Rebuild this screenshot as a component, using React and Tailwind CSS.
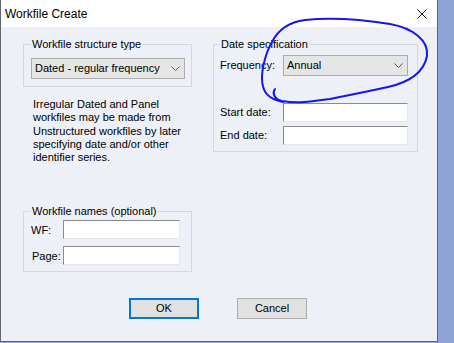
const LABEL = "text-[11px] leading-[13px]";

function Chevron() {
  return (
    <svg width="9" height="5" viewBox="0 0 9 5" className="shrink-0">
      <path d="M0.5 0.5 L4.5 4.5 L8.5 0.5" fill="none" stroke="#5a5a5a" strokeWidth="1" />
    </svg>
  );
}

function Select({ value, width }) {
  return (
    <div
      className="h-[21px] bg-[#e5e5e5] border border-[#adadad] flex items-center justify-between pl-[3px] pr-[4px]"
      style={{ width }}
    >
      <span className="text-[11px] text-black">{value}</span>
      <Chevron />
    </div>
  );
}

function TextBox({ width }) {
  return (
    <div
      className="h-[19px] bg-white border-t border-l border-t-[#8c8c8c] border-l-[#8c8c8c] border-r border-b border-r-[#e6e6e6] border-b-[#e6e6e6]"
      style={{ width }}
    />
  );
}

function Group({ title, className, children }) {
  return (
    <fieldset className={`border border-[#d3d7df] ${className}`}>
      <legend className={`${LABEL} px-[1px]`}>{title}</legend>
      {children}
    </fieldset>
  );
}

export default function App() {
  return (
    <div className="w-[454px] h-[343px] bg-[#8ea3d6] overflow-hidden font-['Liberation_Sans',Arial,sans-serif] text-black">
      <div className="relative w-[438px] h-[342px] bg-[#edf0f7] border-x border-b border-[#5f6673] flex flex-col">
        {/* title bar */}
        <div className="h-[27px] bg-white flex items-center justify-between pl-[4px] pr-[10px]">
          <span className="text-[12px]">Workfile Create</span>
          <svg width="10" height="10" viewBox="0 0 10 10">
            <path d="M0.5 0.5 L9.5 9.5 M9.5 0.5 L0.5 9.5" stroke="#111" strokeWidth="1" />
          </svg>
        </div>

        <div className="pl-[22px]">
          <div className="flex items-start gap-[21px]">
            {/* left column */}
            <div className="w-[169px] flex flex-col">
              <Group title="Workfile structure type" className="mt-[11px] pl-[7px] pb-[7px]">
                <div className="mt-[7px]">
                  <Select value="Dated - regular frequency" width={154} />
                </div>
              </Group>
              <p className="mt-[11px] pl-[10px] text-[11px] leading-[13.3px] whitespace-nowrap">
                Irregular Dated and Panel
                <br />
                workfiles may be made from
                <br />
                Unstructured workfiles by later
                <br />
                specifying date and/or other
                <br />
                identifier series.
              </p>
              <Group title="Workfile names (optional)" className="mt-[41px] pl-[7px] pb-[6px]">
                <div className="mt-[2px] flex items-center">
                  <span className="w-[32px] text-[11px]">WF:</span>
                  <TextBox width={117} />
                </div>
                <div className="mt-[7px] flex items-center">
                  <span className="w-[32px] pl-[1px] text-[11px]">Page:</span>
                  <TextBox width={117} />
                </div>
              </Group>
            </div>

            {/* right column */}
            <div className="w-[205px] flex flex-col">
              <Group title="Date specification" className="mt-[11px] pl-[6px] pb-[6px]">
                <div className="mt-[4px] flex items-center">
                  <span className="w-[63px] text-[11px]">Frequency:</span>
                  <Select value="Annual" width={125} />
                </div>
                <div className="mt-[27px] flex items-center">
                  <span className="w-[63px] text-[11px]">Start date:</span>
                  <TextBox width={125} />
                </div>
                <div className="mt-[4px] flex items-center">
                  <span className="w-[63px] text-[11px]">End date:</span>
                  <TextBox width={125} />
                </div>
              </Group>
            </div>
          </div>

          {/* buttons */}
          <div className="mt-[26px] ml-[106px] flex gap-[38px]">
            <button className="w-[70px] h-[21px] border-2 border-[#0078d7] bg-[#e1e1e1] text-[11px] leading-none">
              OK
            </button>
            <button className="w-[70px] h-[21px] border border-[#adadad] bg-[#e1e1e1] text-[11px] leading-none">
              Cancel
            </button>
          </div>
        </div>

        {/* hand-drawn annotation */}
        <svg
          className="absolute left-[-1px] top-0 pointer-events-none"
          width="438"
          height="342"
          viewBox="0 0 438 342"
        >
          <path
            d="M275 89 C272 93, 274 99, 282 101 C300 104, 315 101, 330 99 C350 95, 370 91, 388 87 C410 82, 424 72, 427 56 C429 40, 412 28, 390 24 C365 20, 335 17, 305 20 C290 22, 278 30, 272 42 C266 52, 262 68, 262 78 C262 92, 268 99, 283 102"
            fill="none"
            stroke="#1616f5"
            strokeWidth="2"
            strokeLinecap="round"
            strokeLinejoin="round"
          />
        </svg>
      </div>
    </div>
  );
}
